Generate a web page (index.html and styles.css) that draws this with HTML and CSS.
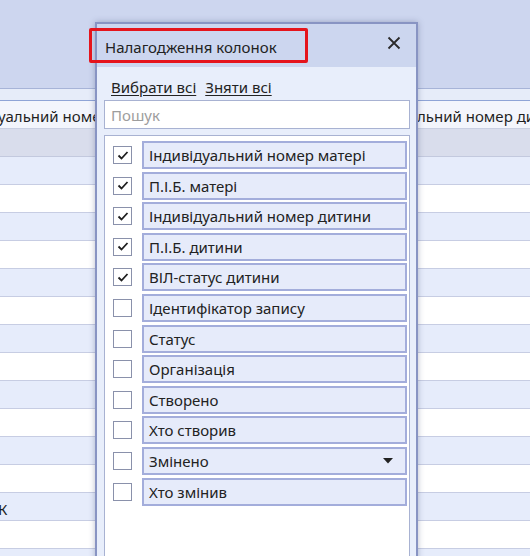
FILE: index.html
```html
<!DOCTYPE html>
<html lang="uk">
<head>
<meta charset="utf-8">
<title>Налагодження колонок</title>
<link rel="stylesheet" href="styles.css">
</head>
<body>
<div class="page">
  <div class="top"></div>
  <div class="band"></div>
  <div class="head-row">
    <span class="head-left">уальний номер матері</span>
    <span class="head-right">льний номер дитини</span>
  </div>
  <div class="filter-row"></div>
  <div class="row alt"></div>
  <div class="row"></div>
  <div class="row alt"></div>
  <div class="row"></div>
  <div class="row alt"></div>
  <div class="row"></div>
  <div class="row alt"></div>
  <div class="row"></div>
  <div class="row alt"></div>
  <div class="row"></div>
  <div class="row alt"></div>
  <div class="row"></div>
  <div class="row alt"><span class="cell-text">К</span></div>
  <div class="row"></div>
  <div class="row alt"></div>

  <div class="dialog">
    <div class="dlg-head">
      <span class="dlg-title">Налагодження колонок</span>
      <svg class="close" width="14" height="14" viewBox="0 0 14 14"><path d="M1.5 1.5 L12.5 12.5 M12.5 1.5 L1.5 12.5" stroke="#2b2b2b" stroke-width="1.8" fill="none"/></svg>
    </div>
    <div class="dlg-body">
      <div class="links"><a class="lnk">Вибрати всі</a><a class="lnk">Зняти всі</a></div>
      <div class="search">Пошук</div>
      <div class="list">
        <div class="item"><span class="cb on"><svg width="16" height="15" viewBox="0 0 16 15"><path d="M3.5 7.5 L6.5 10.5 L12.5 4" stroke="#1e1e1e" stroke-width="1.8" fill="none"/></svg></span><span class="lbl">Індивідуальний номер матері</span></div>
        <div class="item"><span class="cb on"><svg width="16" height="15" viewBox="0 0 16 15"><path d="M3.5 7.5 L6.5 10.5 L12.5 4" stroke="#1e1e1e" stroke-width="1.8" fill="none"/></svg></span><span class="lbl">П.І.Б. матері</span></div>
        <div class="item"><span class="cb on"><svg width="16" height="15" viewBox="0 0 16 15"><path d="M3.5 7.5 L6.5 10.5 L12.5 4" stroke="#1e1e1e" stroke-width="1.8" fill="none"/></svg></span><span class="lbl">Індивідуальний номер дитини</span></div>
        <div class="item"><span class="cb on"><svg width="16" height="15" viewBox="0 0 16 15"><path d="M3.5 7.5 L6.5 10.5 L12.5 4" stroke="#1e1e1e" stroke-width="1.8" fill="none"/></svg></span><span class="lbl">П.І.Б. дитини</span></div>
        <div class="item"><span class="cb on"><svg width="16" height="15" viewBox="0 0 16 15"><path d="M3.5 7.5 L6.5 10.5 L12.5 4" stroke="#1e1e1e" stroke-width="1.8" fill="none"/></svg></span><span class="lbl">ВІЛ-статус дитини</span></div>
        <div class="item"><span class="cb"></span><span class="lbl">Ідентифікатор запису</span></div>
        <div class="item"><span class="cb"></span><span class="lbl">Статус</span></div>
        <div class="item"><span class="cb"></span><span class="lbl">Організація</span></div>
        <div class="item"><span class="cb"></span><span class="lbl">Створено</span></div>
        <div class="item"><span class="cb"></span><span class="lbl">Хто створив</span></div>
        <div class="item"><span class="cb"></span><span class="lbl">Змінено<svg class="caret" width="10" height="6" viewBox="0 0 10 6"><path d="M0 0 H10 L5 5.5 Z" fill="#222"/></svg></span></div>
        <div class="item"><span class="cb"></span><span class="lbl">Хто змінив</span></div>
      </div>
    </div>
  </div>
  <div class="highlight"></div>
</div>
</body>
</html>
```

FILE: styles.css
```css
* { box-sizing: border-box; }
html, body { margin: 0; padding: 0; }
body {
  font-family: "Noto Sans", "Open Sans", sans-serif;
  color: #1f1f1f;
  background: #ffffff;
  width: 530px;
  height: 556px;
  overflow: hidden;
}
.page {
  position: relative;
  width: 530px;
  height: 556px;
  overflow: hidden;
}
.top {
  height: 89px;
  background: #cdd6ef;
  border-bottom: 1px solid #a7b4d8;
}
.band {
  height: 12px;
  background: #e6ecf9;
  border-bottom: 1px solid #8fa4d6;
}
.head-row {
  height: 28px;
  background: #f3f5fc;
  display: flex;
  align-items: center;
  font-size: 15px;
  white-space: nowrap;
  overflow: hidden;
  border-bottom: 1px solid #c9cfe2;
  padding-top: 2px;
}
.head-left { margin-left: -2px; width: 100px; flex: none; overflow: hidden; }
.head-right { flex: none; margin-left: 319px; }
.filter-row {
  height: 28px;
  background: #d9ddec;
  border-bottom: 1px solid #c3c9de;
}
.row {
  height: 28px;
  background: #ffffff;
  border-bottom: 1px solid #c7cde3;
  display: flex;
  align-items: center;
  font-size: 15px;
  padding-top: 4px;
}
.row.alt { background: #e6ecfb; }
.cell-text { margin-left: -2px; }

.dialog {
  position: absolute;
  left: 95px;
  top: 22px;
  width: 323px;
  height: 560px;
  border: 2px solid #8894c3;
  background: #e8eefb;
  box-shadow: 0 0 6px rgba(60, 70, 110, 0.35);
  display: flex;
  flex-direction: column;
}
.dlg-head {
  height: 43px;
  background: #ccd6ef;
  display: flex;
  align-items: center;
  justify-content: space-between;
  padding: 0 15px 0 8px;
  flex: none;
}
.dlg-title { font-size: 15px; color: #222; margin-top: 2px; }
.close { margin-top: -6px; }
.dlg-body {
  padding: 0 6px 0 7px;
  display: flex;
  flex-direction: column;
  flex: 1;
}
.links {
  height: 20px;
  margin-top: 10px;
  display: flex;
  align-items: center;
  gap: 9px;
  padding-left: 7px;
  font-size: 15px;
}
.lnk { text-decoration: underline; color: #222; text-underline-offset: 2px; }
.search {
  margin-top: 3px;
  height: 29px;
  background: #ffffff;
  border: 1px solid #a8b2d2;
  display: flex;
  align-items: center;
  padding-left: 6px;
  font-size: 15px;
  color: #9d9d9d;
}
.list {
  margin-top: 6px;
  flex: 1;
  background: #ffffff;
  border: 1px solid #a8b2d2;
  padding: 5px 2px 0 8px;
  display: flex;
  flex-direction: column;
  gap: 2.6px;
}
.item {
  display: flex;
  align-items: center;
  height: 28px;
  gap: 10px;
}
.cb {
  width: 19px;
  height: 18px;
  flex: none;
  border: 1px solid #8a91ab;
  background: #ffffff;
  display: flex;
  align-items: center;
  justify-content: center;
}
.lbl {
  flex: 1;
  height: 28px;
  background: #e6ebfa;
  border: 2px solid #a3addb;
  display: flex;
  align-items: center;
  justify-content: space-between;
  padding: 0 12px 0 5px;
  font-size: 15px;
  color: #222;
}
.highlight {
  position: absolute;
  left: 89px;
  top: 28px;
  width: 219px;
  height: 35px;
  border: 3px solid #e5141c;
  border-radius: 2px;
}
```
